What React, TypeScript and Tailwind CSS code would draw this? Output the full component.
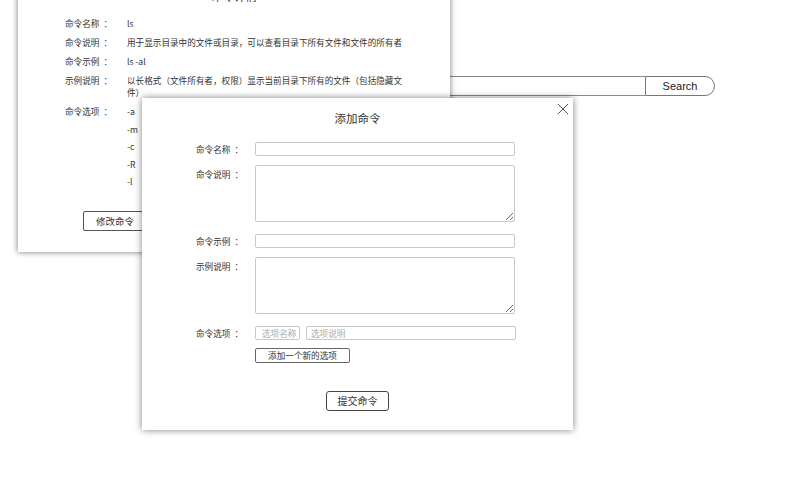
import React from "react";

const Lbl = ({ text }: { text: string }) => (
  <>
    {text}
    <span className="ml-[4px]">：</span>
  </>
);

const Row = ({ label, children }: { label: string; children: React.ReactNode }) => (
  <div className="flex gap-[13px] leading-[12px]">
    <div className="w-[49px] shrink-0 whitespace-nowrap">
      <Lbl text={label} />
    </div>
    <div className="w-[282px]">{children}</div>
  </div>
);

export default function App() {
  return (
    <div className="relative w-[806px] h-[500px] overflow-hidden bg-white font-['Noto_Sans_CJK_SC',sans-serif] text-[#333]">
      {/* search bar behind */}
      <div className="pt-[76px] pl-[230px] flex">
        <div className="w-[415px] h-[20px] border border-[#8a8a8a] border-r-0 bg-white" />
        <button className="w-[70px] h-[20px] border border-[#777] rounded-r-[10px] bg-white font-['Liberation_Sans',sans-serif] text-[11px] leading-[18px] text-[#222]">
          Search
        </button>
      </div>

      {/* detail panel */}
      <div className="absolute left-[18px] top-[-25px] w-[432px] h-[277px] bg-white shadow-[0_0_6px_rgba(0,0,0,0.55)]">
        <div className="pt-[14px] text-center text-[11.5px] leading-[14px]">命令详情</div>
        <div className="mt-[14px] pl-[47px] flex flex-col gap-[7px] text-[8.6px]">
          <Row label="命令名称">ls</Row>
          <Row label="命令说明">用于显示目录中的文件或目录，可以查看目录下所有文件和文件的所有者</Row>
          <Row label="命令示例">ls -al</Row>
          <Row label="示例说明">以长格式（文件所有者，权限）显示当前目录下所有的文件（包括隐藏文件）</Row>
          <Row label="命令选项">
            <div className="flex flex-col gap-[5.5px]">
              <div>-a</div>
              <div>-m</div>
              <div>-c</div>
              <div>-R</div>
              <div>-l</div>
            </div>
          </Row>
        </div>
        <div className="mt-[24px] pl-[65px] flex gap-[10px]">
          <button className="w-[64px] h-[20px] border border-[#555] rounded-[2px] bg-white text-[9.5px] leading-[18px] text-[#333]">
            修改命令
          </button>
        </div>
      </div>

      {/* add modal */}
      <div className="absolute left-[142px] top-[98px] w-[431px] h-[332px] bg-white shadow-[0_0_7px_rgba(0,0,0,0.5)]">
        <div className="absolute left-[415px] top-[5px]">
          <svg width="12" height="12" viewBox="0 0 12 12">
            <path d="M1 1L11 11M11 1L1 11" stroke="#555" strokeWidth="1" fill="none" />
          </svg>
        </div>
        <div className="pt-[13px] text-center text-[11.5px] leading-[14px] text-[#333]">添加命令</div>
        <div className="mt-[17px] pl-[54px] flex flex-col text-[8.6px]">
          <div className="flex gap-[10px]">
            <div className="w-[49px] pt-[1px] leading-[12px] whitespace-nowrap"><Lbl text="命令名称" /></div>
            <input className="w-[260px] h-[14px] border border-[#c8c8c8] rounded-[2px] outline-none" />
          </div>
          <div className="flex gap-[10px] mt-[9px]">
            <div className="w-[49px] pt-[3px] leading-[12px] whitespace-nowrap"><Lbl text="命令说明" /></div>
            <textarea className="w-[260px] h-[57px] border border-[#c8c8c8] rounded-[2px] outline-none" />
          </div>
          <div className="flex gap-[10px] mt-[12px]">
            <div className="w-[49px] pt-[1px] leading-[12px] whitespace-nowrap"><Lbl text="命令示例" /></div>
            <input className="w-[260px] h-[14px] border border-[#c8c8c8] rounded-[2px] outline-none" />
          </div>
          <div className="flex gap-[10px] mt-[9px]">
            <div className="w-[49px] pt-[3px] leading-[12px] whitespace-nowrap"><Lbl text="示例说明" /></div>
            <textarea className="w-[260px] h-[57px] border border-[#c8c8c8] rounded-[2px] outline-none" />
          </div>
          <div className="flex gap-[10px] mt-[12px]">
            <div className="w-[49px] pt-[1px] leading-[12px] whitespace-nowrap"><Lbl text="命令选项" /></div>
            <div className="flex flex-col">
              <div className="flex gap-[6px]">
                <input
                  placeholder="选项名称"
                  className="w-[45px] h-[14px] border border-[#c8c8c8] rounded-[2px] pl-[6px] outline-none text-[8.6px] placeholder:text-[#aaa]"
                />
                <input
                  placeholder="选项说明"
                  className="w-[210px] h-[14px] border border-[#c8c8c8] rounded-[2px] pl-[4px] outline-none text-[8.6px] placeholder:text-[#aaa]"
                />
              </div>
              <button className="mt-[8px] w-[95px] h-[15px] border border-[#666] rounded-[2px] bg-white text-[8.6px] leading-[13px] text-[#333]">
                添加一个新的选项
              </button>
            </div>
          </div>
        </div>
        <div className="mt-[28px] flex justify-center">
          <button className="w-[63px] h-[20px] border border-[#444] rounded-[3px] bg-white text-[10px] leading-[18px] text-[#333]">
            提交命令
          </button>
        </div>
      </div>
    </div>
  );
}
